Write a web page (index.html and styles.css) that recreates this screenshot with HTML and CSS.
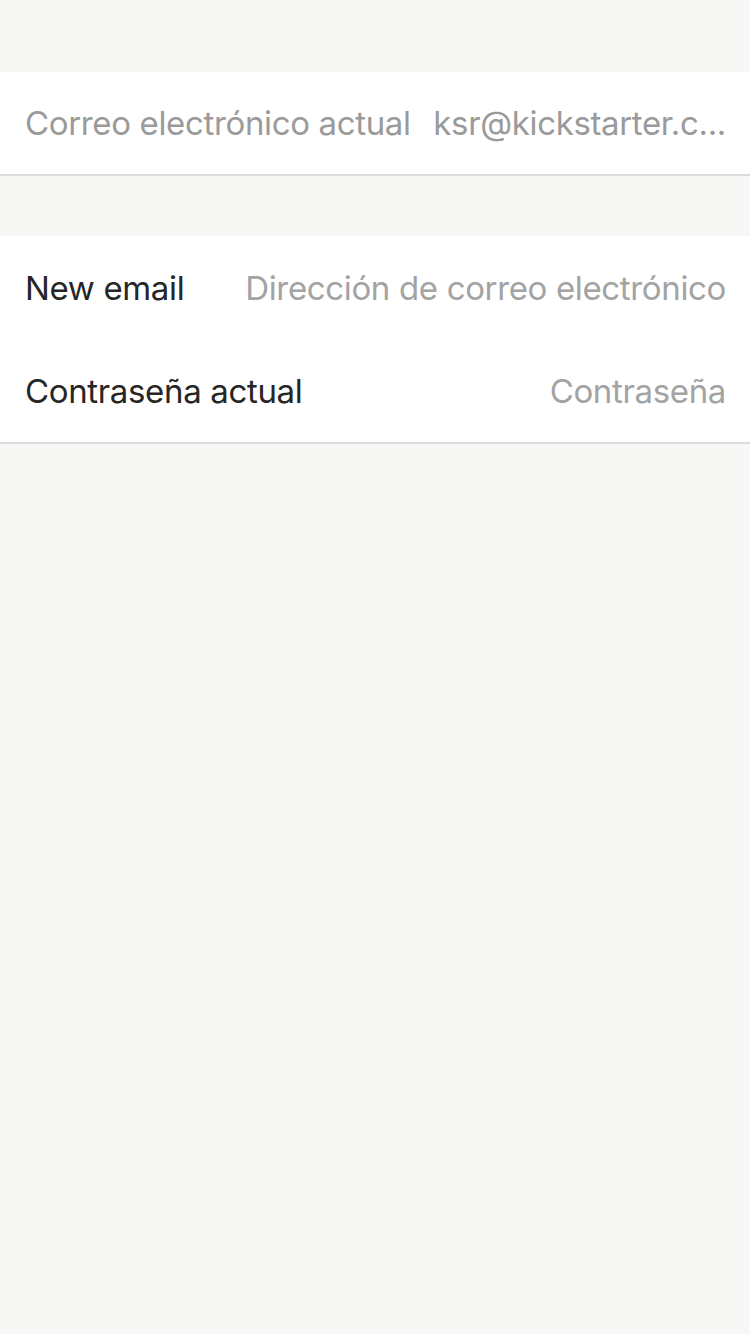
FILE: index.html
```html
<!DOCTYPE html>
<html lang="es">
<head>
<meta charset="utf-8">
<title>Cambiar correo electrónico</title>
<link rel="stylesheet" href="styles.css">
</head>
<body>
<main class="page">
  <section class="group group-current">
    <div class="row row-current">
      <span class="label label-muted">Correo electrónico actual</span>
      <span class="value">ksr@kickstarter.c...</span>
    </div>
  </section>
  <section class="group group-form">
    <div class="row">
      <label class="label" for="new-email">New email</label>
      <input class="field" id="new-email" type="email" placeholder="Dirección de correo electrónico">
    </div>
    <div class="row">
      <label class="label" for="password">Contraseña actual</label>
      <input class="field" id="password" type="password" placeholder="Contraseña">
    </div>
  </section>
</main>
</body>
</html>
```

FILE: styles.css
```css
html, body {
  margin: 0;
  padding: 0;
  background: #f7f7f5;
}
body {
  font-family: Inter, Roboto, "Liberation Sans", sans-serif;
  -webkit-font-smoothing: antialiased;
}
.page {
  min-height: 1334px;
  padding-top: 72px;
  box-sizing: border-box;
}
.group {
  background: #ffffff;
  border-bottom: 2px solid #dcdcdc;
}
.group-form {
  margin-top: 60px;
}
.row {
  display: flex;
  align-items: center;
  height: 103px;
  padding: 0 24px 0 25px;
  box-sizing: border-box;
  gap: 26px;
}
.row-current {
  height: 102px;
  justify-content: space-between;
  gap: 16px;
}
.label {
  font-size: 33px;
  color: #262626;
  white-space: nowrap;
  flex: none;
  letter-spacing: -0.35px;
}
.label-muted {
  color: #9a9a9a;
}
.value {
  flex: none;
  text-align: right;
  font-size: 33px;
  color: #9a9a9a;
  white-space: nowrap;
  letter-spacing: -0.35px;
}
.field {
  flex: 1;
  min-width: 0;
  border: 0;
  outline: 0;
  padding: 0;
  margin: 0;
  background: transparent;
  text-align: right;
  font-family: inherit;
  font-size: 33px;
  color: #262626;
  letter-spacing: -0.35px;
}
.field::placeholder {
  color: #a3a3a3;
  opacity: 1;
}
```
